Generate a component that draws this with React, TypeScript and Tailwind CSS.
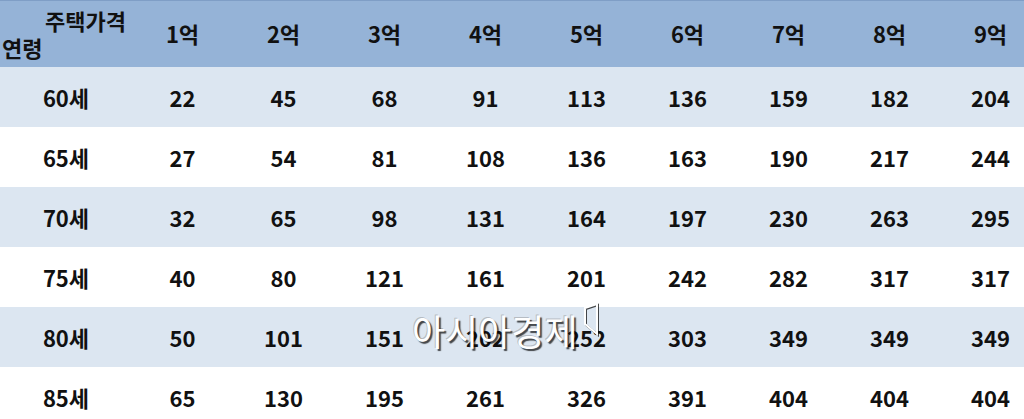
const headers = ["1억", "2억", "3억", "4억", "5억", "6억", "7억", "8억", "9억"];

const rows: { age: string; values: number[] }[] = [
  { age: "60세", values: [22, 45, 68, 91, 113, 136, 159, 182, 204] },
  { age: "65세", values: [27, 54, 81, 108, 136, 163, 190, 217, 244] },
  { age: "70세", values: [32, 65, 98, 131, 164, 197, 230, 263, 295] },
  { age: "75세", values: [40, 80, 121, 161, 201, 242, 282, 317, 317] },
  { age: "80세", values: [50, 101, 151, 202, 252, 303, 349, 349, 349] },
  { age: "85세", values: [65, 130, 195, 261, 326, 391, 404, 404, 404] },
];

export default function App() {
  return (
    <div className="relative w-[1024px] h-[419px] overflow-hidden bg-white text-[#111] font-bold text-[22px] [font-family:'Noto_Sans_CJK_KR','Noto_Sans',sans-serif]">
      {/* header */}
      <div className="grid grid-cols-[132px_repeat(9,101px)] h-[67px] bg-[#95b3d7] border-t border-[#7f9ec6]">
        <div className="relative">
          <span className="absolute right-[6px] top-[4px] leading-[30px]">주택가격</span>
          <span className="absolute left-[2px] top-[31px] leading-[30px]">연령</span>
        </div>
        {headers.map((h) => (
          <div key={h} className="flex items-center justify-center pb-[2px]">
            {h}
          </div>
        ))}
      </div>

      {rows.map((r, i) => (
        <div
          key={r.age}
          className={`grid grid-cols-[132px_repeat(9,101px)] h-[60px] ${i % 2 === 0 ? "bg-[#dce6f1]" : "bg-white"}`}
        >
          <div className="flex items-center justify-center">{r.age}</div>
          {r.values.map((v, j) => (
            <div key={j} className="flex items-center justify-center">
              {v}
            </div>
          ))}
        </div>
      ))}

      {/* watermark */}
      <div className="absolute left-[412px] top-[302px] flex items-start gap-[4px] pointer-events-none">
        <span className="mt-[10px] text-white font-normal text-[36px] leading-[36px] [text-shadow:2px_2px_1px_rgba(0,0,0,0.7),-1px_-1px_0_rgba(120,120,120,0.4)]">
          아시아경제
        </span>
        <svg width="18" height="34" viewBox="0 0 18 34" className="drop-shadow-[1px_1px_0_rgba(0,0,0,0.7)]">
          <path d="M3 6L15 2V32L3 22Z" fill="none" stroke="#fff" strokeWidth="2" strokeLinejoin="miter" />
        </svg>
      </div>
    </div>
  );
}
